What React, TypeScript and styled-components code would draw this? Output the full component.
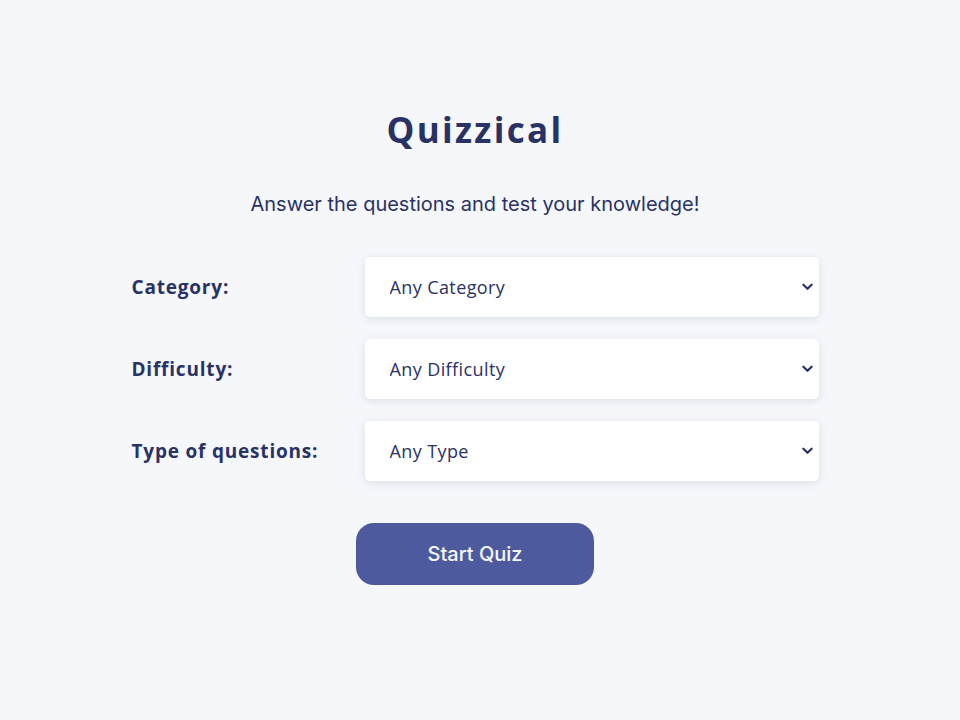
import { useState } from 'react';
import styled, { createGlobalStyle } from 'styled-components';

const GlobalStyle = createGlobalStyle`
  html, body {
    margin: 0;
    padding: 0;
    background: #f5f7fb;
  }
  body {
    font-family: Inter, "Liberation Sans", sans-serif;
    color: #293264;
  }
`;

const categories = ['Any Category', 'General Knowledge', 'Books', 'Film', 'Music', 'Science & Nature'];
const difficulties = ['Any Difficulty', 'Easy', 'Medium', 'Hard'];
const types = ['Any Type', 'Multiple Choice', 'True / False'];

export default function App() {
    const [category, setCategory] = useState(categories[0]);
    const [difficulty, setDifficulty] = useState(difficulties[0]);
    const [type, setType] = useState(types[0]);

    const fields = [
        { label: 'Category:', value: category, onChange: setCategory, options: categories },
        { label: 'Difficulty:', value: difficulty, onChange: setDifficulty, options: difficulties },
        { label: 'Type of questions:', value: type, onChange: setType, options: types },
    ];

    return (
        <>
            <GlobalStyle />
            <StyledPage>
                <StyledTitle>Quizzical</StyledTitle>
                <StyledSubtitle>Answer the questions and test your knowledge!</StyledSubtitle>
                <StyledForm>
                    {fields.map(field => (
                        <StyledRow key={field.label}>
                            <StyledLabel>{field.label}</StyledLabel>
                            <StyledSelectWrap>
                                <StyledSelect value={field.value} onChange={e => field.onChange(e.target.value)}>
                                    {field.options.map(o => <option key={o}>{o}</option>)}
                                </StyledSelect>
                                <StyledChevron viewBox="0 0 12 8">
                                    <path d="M1.5 1.5 L6 6 L10.5 1.5" />
                                </StyledChevron>
                            </StyledSelectWrap>
                        </StyledRow>
                    ))}
                </StyledForm>
                <StyledStartButton>Start Quiz</StyledStartButton>
            </StyledPage>
        </>
    );
}

const StyledPage = styled.main`
    width: 950px;
    min-height: 720px;
    display: flex;
    flex-direction: column;
    align-items: center;
    padding-top: 106px;
    box-sizing: border-box;
`;

const StyledTitle = styled.h1`
    margin: 0;
    font-family: "Open Sans", "Liberation Sans", sans-serif;
    font-weight: 700;
    font-size: 35px;
    letter-spacing: 2.3px;
    line-height: 48px;
    color: #293264;
`;

const StyledSubtitle = styled.p`
    margin: 38px 0 0;
    font-family: Inter, "Liberation Sans", sans-serif;
    font-size: 20px;
    line-height: 24px;
    color: #293264;
`;

const StyledForm = styled.div`
    margin-top: 41px;
    display: flex;
    flex-direction: column;
    gap: 22px;
    width: 687px;
`;

const StyledRow = styled.div`
    display: grid;
    grid-template-columns: 233px 454px;
    align-items: center;
`;

const StyledLabel = styled.label`
    font-family: "Open Sans", "Liberation Sans", sans-serif;
    font-weight: 700;
    font-size: 19px;
    letter-spacing: 0.8px;
    color: #293264;
`;

const StyledSelectWrap = styled.div`
    position: relative;
    height: 60px;
`;

const StyledSelect = styled.select`
    appearance: none;
    width: 100%;
    height: 60px;
    border: none;
    border-radius: 5px;
    background: #ffffff;
    box-shadow: 0 2px 8px rgba(41, 50, 100, 0.12);
    padding: 0 40px 0 25px;
    font-family: "Open Sans", "Liberation Sans", sans-serif;
    font-size: 18px;
    letter-spacing: 0.4px;
    color: #293264;
    outline: none;
`;

const StyledChevron = styled.svg`
    position: absolute;
    right: 6px;
    top: 26px;
    width: 11px;
    height: 8px;
    pointer-events: none;
    fill: none;
    stroke: #293264;
    stroke-width: 2.4;
    stroke-linecap: round;
    stroke-linejoin: round;
`;

const StyledStartButton = styled.button`
    margin-top: 42px;
    width: 238px;
    height: 62px;
    border: none;
    border-radius: 18px;
    background: #4d5b9e;
    color: #f5f7fb;
    font-family: Inter, "Liberation Sans", sans-serif;
    font-size: 20px;
    font-weight: 500;
    cursor: pointer;
`;
